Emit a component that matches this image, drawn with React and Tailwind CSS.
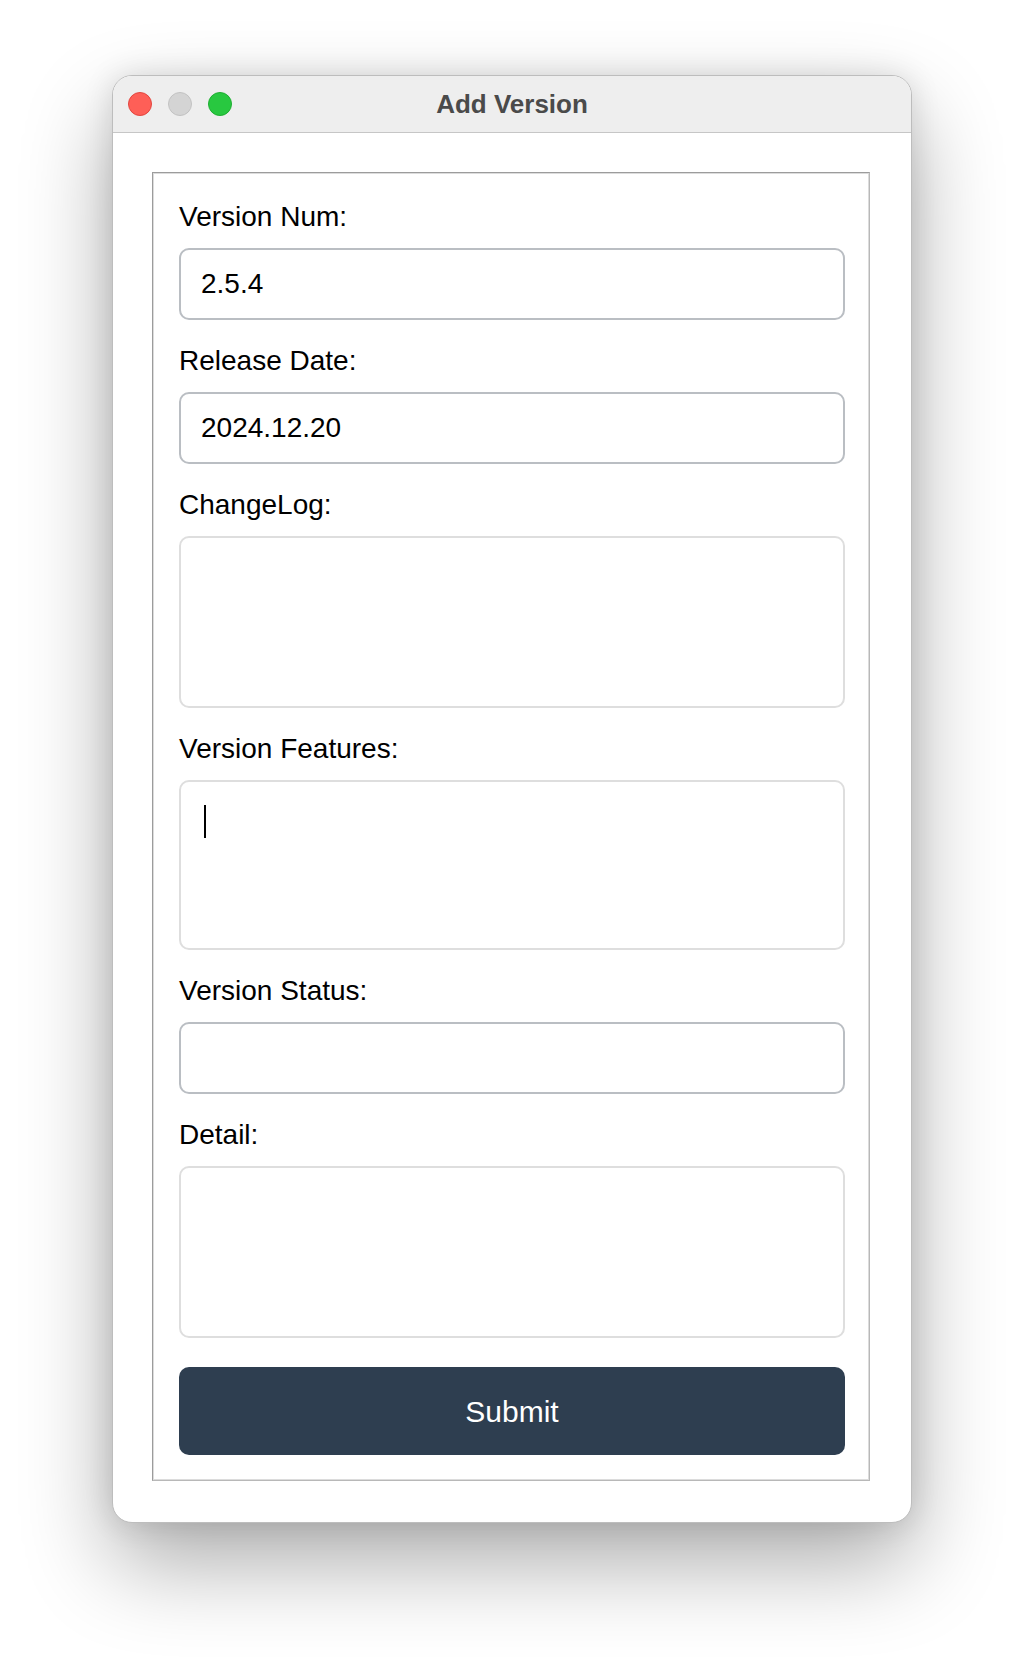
import React from "react";

const font = { fontFamily: '"Liberation Sans", Arial, sans-serif' };

function Label({ children }) {
  return <div className="text-[28px] leading-[34px] text-black mb-[14px]">{children}</div>;
}

function TextInput({ value }) {
  return (
    <input
      type="text"
      defaultValue={value}
      readOnly
      className="block w-full h-[72px] px-5 text-[28px] text-black bg-white border-2 border-[#babec3] rounded-[10px] outline-none"
      style={font}
    />
  );
}

function TextArea({ height, caret }) {
  return (
    <div className="relative">
      <textarea
        readOnly
        className={`block w-full ${height} resize-none px-5 py-4 text-[28px] bg-white border-2 border-[#dedede] rounded-[10px] outline-none`}
        style={font}
      />
      {/* fake caret, focus is not shown in a screenshot */}
      {caret && <span className="absolute left-[25px] top-[25px] w-[2px] h-[33px] bg-black" />}
    </div>
  );
}

export default function App() {
  return (
    <div className="min-h-[1670px] bg-white pt-[75px]" style={font}>
      <div className="mx-auto w-[800px] bg-white rounded-[20px] border border-[#bdbdbd] overflow-hidden shadow-[0_40px_90px_rgba(0,0,0,0.33),0_0_30px_rgba(0,0,0,0.12)]">
        {/* Title bar */}
        <div className="relative h-[57px] bg-[#eeeeee] border-b border-[#c6c6c6] flex items-center justify-center">
          <div className="absolute left-[15px] top-[16px] flex gap-4">
            <span className="w-6 h-6 rounded-full bg-[#fe5f57] border border-[#e2463f]" />
            <span className="w-6 h-6 rounded-full bg-[#d4d4d4] border border-[#c2c2c2]" />
            <span className="w-6 h-6 rounded-full bg-[#28c840] border border-[#1eae31]" />
          </div>
          <span className="text-[26px] font-bold text-[#4a4a4a]">Add Version</span>
        </div>

        {/* Content */}
        <div className="pt-[39px] pl-[39px] pr-[41px] pb-[41px]">
          <div className="border border-t-[#9c9c9c] border-l-[#9c9c9c] border-b-[#b8b8b8] border-r-[#b8b8b8]">
            <div className="border border-[#dcdcdc] pt-[26px] pl-[25px] pr-[23px] pb-[24px]">
              <Label>Version Num:</Label>
              <TextInput value="2.5.4" />

              <div className="mt-[24px]">
                <Label>Release Date:</Label>
                <TextInput value="2024.12.20" />
              </div>

              <div className="mt-[24px]">
                <Label>ChangeLog:</Label>
                <TextArea height="h-[172px]" />
              </div>

              <div className="mt-[24px]">
                <Label>Version Features:</Label>
                <TextArea height="h-[170px]" caret />
              </div>

              <div className="mt-[24px]">
                <Label>Version Status:</Label>
                <TextInput value="" />
              </div>

              <div className="mt-[24px]">
                <Label>Detail:</Label>
                <TextArea height="h-[172px]" />
              </div>

              <button
                type="button"
                className="mt-[29px] w-full h-[88px] rounded-[10px] bg-[#2e3e50] text-white text-[30px]"
                style={font}
              >
                Submit
              </button>
            </div>
          </div>
        </div>
      </div>
    </div>
  );
}
